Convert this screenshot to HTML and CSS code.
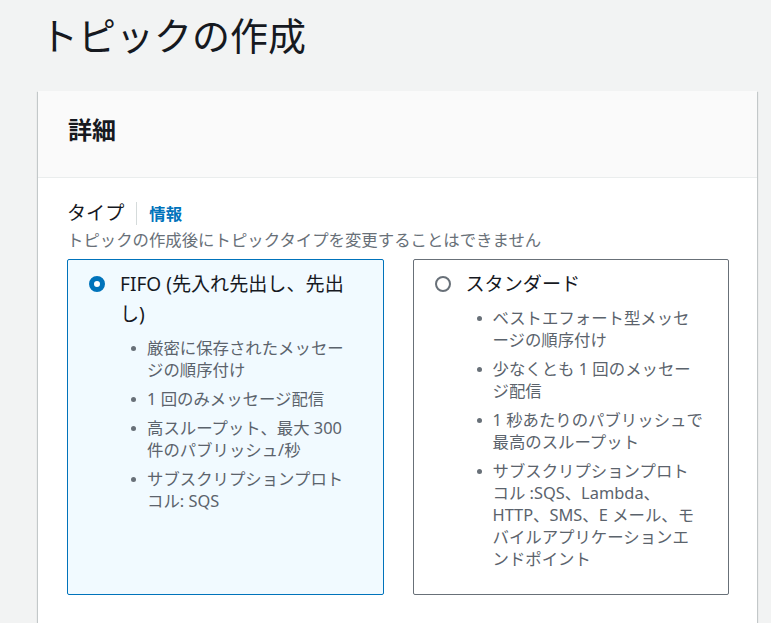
FILE: index.html
```html
<!DOCTYPE html>
<html lang="ja">
<head>
<meta charset="utf-8">
<title>トピックの作成</title>
<link rel="stylesheet" href="styles.css">
</head>
<body>
<h1 class="page-title">トピックの作成</h1>
<section class="card">
  <header class="card-header">
    <h2 class="card-title">詳細</h2>
  </header>
  <div class="card-body">
    <div class="field-label">
      <span class="label-text">タイプ</span>
      <a class="info-link" href="#">情報</a>
    </div>
    <div class="field-desc">トピックの作成後にトピックタイプを変更することはできません</div>
    <div class="tiles">
      <div class="tile tile-selected">
        <span class="radio radio-checked"></span>
        <div class="tile-content">
          <div class="tile-label">FIFO (先入れ先出し、先出し)</div>
          <ul class="tile-list">
            <li>厳密に保存されたメッセージの順序付け</li>
            <li>1 回のみメッセージ配信</li>
            <li>高スループット、最大 300 件のパブリッシュ/秒</li>
            <li>サブスクリプションプロトコル: SQS</li>
          </ul>
        </div>
      </div>
      <div class="tile">
        <span class="radio"></span>
        <div class="tile-content">
          <div class="tile-label">スタンダード</div>
          <ul class="tile-list">
            <li>ベストエフォート型メッセージの順序付け</li>
            <li>少なくとも 1 回のメッセージ配信</li>
            <li>1 秒あたりのパブリッシュで最高のスループット</li>
            <li>サブスクリプションプロトコル :SQS、Lambda、HTTP、SMS、E メール、モバイルアプリケーションエンドポイント</li>
          </ul>
        </div>
      </div>
    </div>
  </div>
</section>
</body>
</html>
```

FILE: styles.css
```css
html, body {
  margin: 0;
  padding: 0;
}
body {
  background: #f2f3f3;
  font-family: "Noto Sans", "Noto Sans CJK JP", sans-serif;
  color: #16191f;
  width: 771px;
  height: 623px;
  overflow: hidden;
}
.page-title {
  margin: 0;
  padding: 11px 0 0 40px;
  font-size: 38px;
  line-height: 48px;
  font-weight: 400;
  color: #16191f;
}
.card {
  margin: 32px 0 0 38px;
  width: 719px;
  background: #ffffff;
  box-shadow: 0 1px 1px 0 rgba(0, 28, 36, 0.3), 1px 1px 1px 0 rgba(0, 28, 36, 0.15), -1px 1px 1px 0 rgba(0, 28, 36, 0.15);
}
.card-header {
  background: #fafafa;
  border-bottom: 1px solid #eaeded;
  padding: 24px 30px 32px 30px;
}
.card-title {
  margin: 0;
  font-size: 24px;
  line-height: 30px;
  font-weight: 700;
  color: #16191f;
}
.card-body {
  padding: 21px 28px 40px 29px;
}
.field-label {
  display: flex;
  align-items: baseline;
  font-size: 19.1px;
  line-height: 30px;
  color: #16191f;
}
.label-text {
  padding-right: 12px;
  margin-right: 12px;
  border-right: 1px solid #d5dbdb;
  line-height: 23px;
}
.info-link {
  font-size: 16.4px;
  font-weight: 700;
  color: #0073bb;
  text-decoration: none;
}
.field-desc {
  font-size: 16.4px;
  line-height: 22px;
  color: #687078;
}
.tiles {
  display: grid;
  grid-template-columns: 1fr 1fr;
  column-gap: 29px;
  margin-top: 8px;
}
.tile {
  display: flex;
  align-items: flex-start;
  gap: 15px;
  border: 1px solid #687078;
  border-radius: 2px;
  background: #ffffff;
  padding: 9px 23px 24px 21px;
}
.tile-selected {
  border-color: #0073bb;
  background: #f1faff;
}
.radio {
  flex: none;
  width: 16px;
  height: 16px;
  box-sizing: border-box;
  border-radius: 50%;
  border: 2px solid #687078;
  background: #ffffff;
  margin-top: 7px;
}
.radio-checked {
  border: 5.5px solid #0073bb;
}
.tile-content {
  flex: 1;
  min-width: 0;
}
.tile-label {
  font-size: 19.1px;
  line-height: 30px;
  color: #16191f;
}
.tile-list {
  list-style: none;
  margin: 8px 0 0 0;
  padding: 0 0 0 27px;
}
.tile-list li {
  position: relative;
  font-size: 16.4px;
  line-height: 22px;
  color: #5b636c;
  margin-bottom: 7px;
}
.tile-list li:last-child {
  margin-bottom: 0;
}
.tile-list li::before {
  content: "";
  position: absolute;
  left: -16px;
  top: 9px;
  width: 5px;
  height: 5px;
  border-radius: 50%;
  background: #687078;
}
```
